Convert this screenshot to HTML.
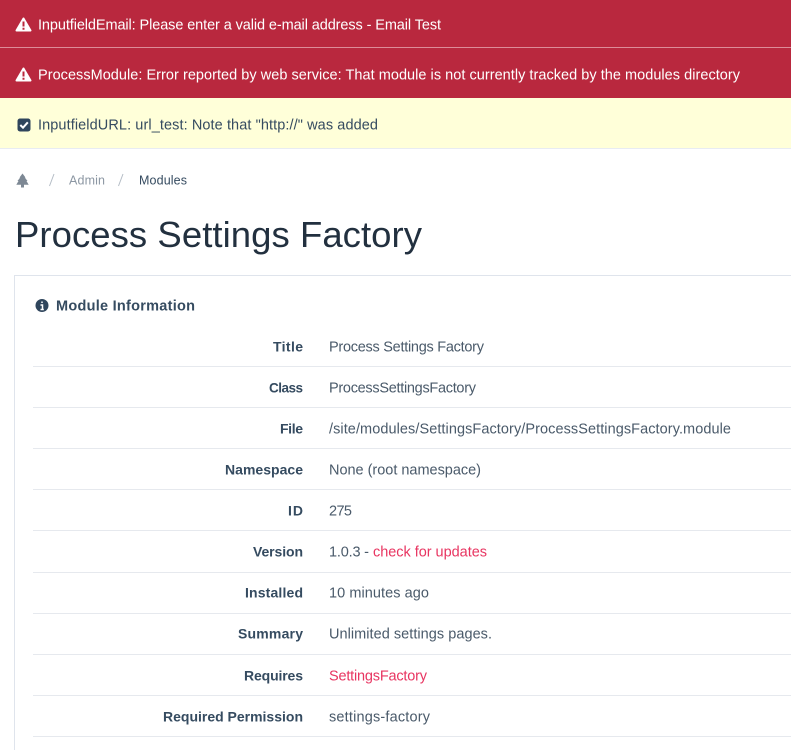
<!DOCTYPE html>
<html><head><meta charset="utf-8"><style>
html,body{margin:0;padding:0;background:#fff;width:791px;height:750px;overflow:hidden}
svg{display:block;font-family:"Liberation Sans",sans-serif;filter:blur(.3px)}
.m{font-size:14.5px;fill:#fff}
.n{font-size:14.5px;fill:#354b60}
.l{font-size:14px;font-weight:bold;fill:#354b60}
.v{font-size:14.5px;fill:#4a5a6a}
.r{font-size:14.5px;fill:#e83561}
</style></head><body>
<svg width="791" height="750" viewBox="0 0 791 750" xmlns="http://www.w3.org/2000/svg">
<rect x="0" y="0" width="791" height="98" fill="#b9283e"/>
<rect x="0" y="47" width="791" height="1" fill="#dd8c98"/>
<rect x="0" y="98" width="791" height="50" fill="#ffffd9"/>
<rect x="0" y="148" width="791" height="1" fill="#e8ecf2"/>

<path d="M23.5 18.500 L30.500 30.500 H16.500 Z" fill="#fff" stroke="#fff" stroke-width="2" stroke-linejoin="round"/>
<path d="M23.5 21.500 V26.500 M23.500 27.800 V29.800" stroke="#b9283e" stroke-width="2"/>
<text class="m" x="38" y="29.500" textLength="403">InputfieldEmail: Please enter a valid e-mail address - Email Test</text>

<path d="M23.5 68.500 L30.500 80.500 H16.500 Z" fill="#fff" stroke="#fff" stroke-width="2" stroke-linejoin="round"/>
<path d="M23.5 71.500 V76.500 M23.500 77.800 V79.800" stroke="#b9283e" stroke-width="2"/>
<text class="m" x="38" y="79.500" textLength="702">ProcessModule: Error reported by web service: That module is not currently tracked by the modules directory</text>

<rect x="17.500" y="118.500" width="13" height="13" rx="2.500" fill="#2f455c"/>
<path d="M20.300 125 L23 127.700 L27.800 122.300" fill="none" stroke="#fff" stroke-width="2"/>
<text class="n" x="38" y="129.500" textLength="340">InputfieldURL: url_test: Note that "http://" was added</text>

<path d="M22.500 173.500 L25.500 177.500 H24.800 L27.500 181 H26.500 L28.700 184.800 H24 V187.500 H21 V184.800 H16.300 L18.500 181 H17.500 L20.200 177.500 H19.500 Z" fill="#7d8894"/>
<path d="M54 174 L49.500 186 M123 174 L118.500 186" stroke="#b4bcc5" stroke-width="1" fill="none"/>
<text x="69" y="184.500" font-size="12.500px" fill="#8c97a3" textLength="36">Admin</text>
<text x="139" y="184.500" font-size="12.500px" fill="#354b60" textLength="48">Modules</text>

<text x="15" y="247" font-size="36.500px" fill="#22303f" textLength="407">Process Settings Factory</text>

<path d="M14.500 750 V275.500 H791" fill="none" stroke="#dfe4ec"/>

<circle cx="42" cy="305.500" r="6.500" fill="#2f455c"/>
<path d="M42 301.500 V303 M40.500 305 H42.500 V309 M40.500 309.500 H43.800" stroke="#fff" stroke-width="1.500" fill="none"/>
<text x="56" y="310.500" font-size="14.500px" font-weight="bold" fill="#354b60" textLength="139">Module Information</text>

<g fill="#e6e9ee">
<rect x="33" y="366" width="758" height="1"/>
<rect x="33" y="407" width="758" height="1"/>
<rect x="33" y="448" width="758" height="1"/>
<rect x="33" y="489" width="758" height="1"/>
<rect x="33" y="530" width="758" height="1"/>
<rect x="33" y="572" width="758" height="1"/>
<rect x="33" y="613" width="758" height="1"/>
<rect x="33" y="654" width="758" height="1"/>
<rect x="33" y="695" width="758" height="1"/>
<rect x="33" y="736" width="758" height="1"/>
</g>

<g transform="translate(0,-.4)">
<text class="l" x="273" y="352" textLength="30">Title</text>
<text class="v" x="329" y="352" textLength="155">Process Settings Factory</text>
<text class="l" x="269" y="393" textLength="34" style="font-size:13.500px">Class</text>
<text class="v" x="329" y="393" textLength="147">ProcessSettingsFactory</text>
<text class="l" x="280" y="434" textLength="23">File</text>
<text class="v" x="329" y="434" textLength="402">/site/modules/SettingsFactory/ProcessSettingsFactory.module</text>
<text class="l" x="225" y="475" textLength="78">Namespace</text>
<text class="v" x="329" y="475" textLength="152">None (root namespace)</text>
<text class="l" x="288" y="516" textLength="15">ID</text>
<text class="v" x="329" y="516" textLength="23">275</text>
<text class="l" x="253" y="557" textLength="50">Version</text>
<text class="v" x="329" y="557" textLength="40">1.0.3 -</text>
<text class="r" x="373" y="557" textLength="114">check for updates</text>
<text class="l" x="245" y="598" textLength="58">Installed</text>
<text class="v" x="329" y="598" textLength="100">10 minutes ago</text>
<text class="l" x="238" y="639" textLength="65">Summary</text>
<text class="v" x="329" y="639" textLength="163">Unlimited settings pages.</text>
<text class="l" x="244" y="681" textLength="59">Requires</text>
<text class="r" x="329" y="681" textLength="98">SettingsFactory</text>
<text class="l" x="163" y="722" textLength="140">Required Permission</text>
<text class="v" x="329" y="722" textLength="101">settings-factory</text>
</g>
</svg>
</body></html>
